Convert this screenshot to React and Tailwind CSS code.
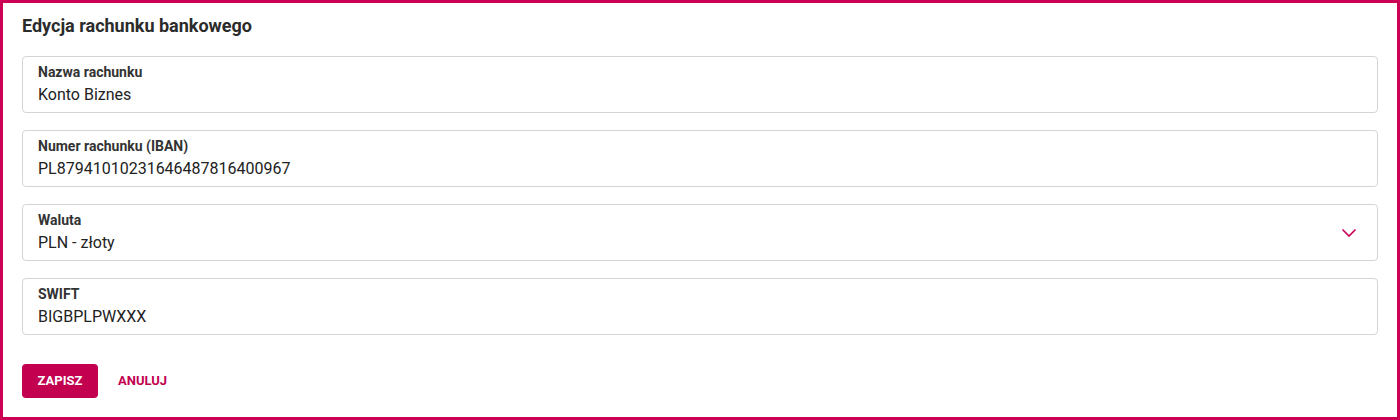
const FIELDS = [
  { label: 'Nazwa rachunku', value: 'Konto Biznes' },
  { label: 'Numer rachunku (IBAN)', value: 'PL87941010231646487816400967' },
  { label: 'Waluta', value: 'PLN - złoty', select: true },
  { label: 'SWIFT', value: 'BIGBPLPWXXX' },
]

function Chevron() {
  return (
    <svg width="16" height="10" viewBox="0 0 16 10" fill="none" className="text-[#c8005a]">
      <path d="M1.5 1.5 8 8l6.5-6.5" stroke="currentColor" strokeWidth="1.6" />
    </svg>
  )
}

function Field({ label, value, select }) {
  return (
    <div className="flex items-center h-[57px] rounded border border-[#d4d4d4] bg-white pl-[15px] pr-[20px]">
      <div className="flex-1 flex flex-col gap-[2px]">
        <span className="text-[14px] leading-[18px] font-bold text-[#333]">{label}</span>
        <span className="text-[16px] leading-6 text-[#222]">{value}</span>
      </div>
      {select && <Chevron />}
    </div>
  )
}

export default function App() {
  return (
    <div className="h-[420px] border-[3px] border-[#cc0055] bg-white px-[19px] pt-[11px] font-['Roboto',sans-serif]">
      <h2 className="h-6 leading-6 text-[18px] font-bold text-[#2b2b2b] mb-[18px]">Edycja rachunku bankowego</h2>
      <div className="flex flex-col gap-[17px]">
        {FIELDS.map((f) => (
          <Field key={f.label} {...f} />
        ))}
      </div>
      <div className="flex items-center gap-5 mt-[29px]">
        <button className="h-[34px] w-[76px] rounded bg-[#c2004f] text-white text-[13px] font-bold">ZAPISZ</button>
        <button className="text-[13px] font-bold text-[#c2004f]">ANULUJ</button>
      </div>
    </div>
  )
}
